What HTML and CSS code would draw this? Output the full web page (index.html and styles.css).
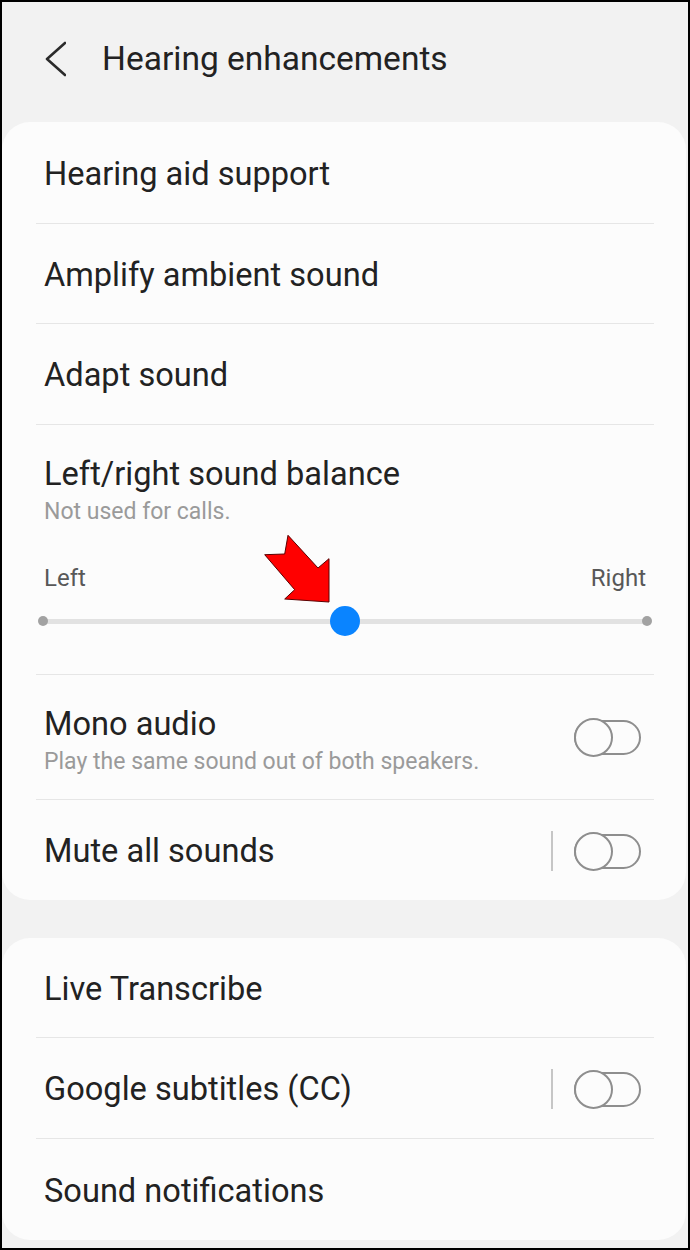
FILE: index.html
```html
<!DOCTYPE html>
<html lang="en">
<head>
<meta charset="utf-8">
<title>Hearing enhancements</title>
<link rel="stylesheet" href="styles.css">
</head>
<body>
<div class="screen">
  <header class="topbar">
    <svg class="back" width="22" height="36" viewBox="0 0 22 36" aria-hidden="true">
      <polyline points="21,2 3,18 21,34" fill="none" stroke="#2b2b2b" stroke-width="2.6" stroke-linecap="round" stroke-linejoin="round"/>
    </svg>
    <h1 class="title">Hearing enhancements</h1>
  </header>

  <section class="card">
    <div class="row h102"><span class="label">Hearing aid support</span></div>
    <div class="row h100"><span class="label">Amplify ambient sound</span></div>
    <div class="row h101"><span class="label">Adapt sound</span></div>
    <div class="row balance">
      <div class="label lh">Left/right sound balance</div>
      <div class="sub">Not used for calls.</div>
      <div class="ends"><span>Left</span><span>Right</span></div>
      <div class="slider">
        <span class="dot"></span>
        <span class="track"></span>
        <span class="dot"></span>
        <span class="thumb"></span>
      </div>
      <svg class="arrow" width="68" height="72" viewBox="264 533 68 72" aria-hidden="true">
        <polygon points="288,535.3 318,568 329,558.7 329,602 284.7,599 294.7,589.7 264.7,554.7 284.7,554" fill="#ff0000" stroke="#5a0000" stroke-width="1" stroke-linejoin="miter"/>
      </svg>
    </div>
    <div class="row mono">
      <div class="textblock">
        <div class="label lh">Mono audio</div>
        <div class="sub">Play the same sound out of both speakers.</div>
      </div>
      <span class="toggle"></span>
    </div>
    <div class="row h100 switchrow">
      <span class="label grow">Mute all sounds</span>
      <span class="vdiv"></span>
      <span class="toggle"></span>
    </div>
  </section>

  <section class="card">
    <div class="row h100"><span class="label">Live Transcribe</span></div>
    <div class="row h101 switchrow">
      <span class="label grow">Google subtitles (CC)</span>
      <span class="vdiv"></span>
      <span class="toggle"></span>
    </div>
    <div class="row h101"><span class="label">Sound notifications</span></div>
  </section>
</div>
</body>
</html>
```

FILE: styles.css
```css
*, *::before, *::after { box-sizing: border-box; }

html, body {
  margin: 0;
  padding: 0;
  background: #f2f2f2;
}

.screen {
  width: 690px;
  height: 1250px;
  border: 2px solid #000;
  background: #f2f2f2;
  font-family: Roboto, "Noto Sans", "Liberation Sans", sans-serif;
  color: #222;
  overflow: hidden;
}

.topbar {
  height: 120px;
  display: flex;
  align-items: center;
  padding: 0 0 6px 42px;
}

.back {
  display: block;
  flex: none;
}

.title {
  margin: 0 0 0 36px;
  font-size: 33.5px;
  line-height: 40px;
  font-weight: 400;
  color: #222;
}

.card {
  background: #fcfcfc;
  border-radius: 28px;
  margin: 0 2px 38px 0;
}

.row {
  display: flex;
  align-items: center;
  margin: 0 32px 0 34px;
  padding: 2px 0 0 8px;
  border-bottom: 1px solid #e6e6e6;
  position: relative;
}

.row:last-child { border-bottom: none; }

.h100 { height: 100px; }
.h101 { height: 101px; }
.h102 { height: 102px; }

.label {
  font-size: 32.6px;
  line-height: 38px;
  font-weight: 400;
  color: #222;
  white-space: nowrap;
}

.grow { flex: 1; }

.sub {
  margin-top: 6px;
  font-size: 23px;
  line-height: 26px;
  color: #9a9a9a;
  white-space: nowrap;
}

.balance {
  height: 250px;
  flex-direction: column;
  align-items: stretch;
  padding-top: 30px;
}

.ends {
  display: flex;
  justify-content: space-between;
  margin: 39px 8px 0 0;
  font-size: 24px;
  line-height: 28px;
  color: #585858;
}

.slider {
  position: relative;
  height: 30px;
  margin: 14px 2px 0 -6px;
  display: flex;
  align-items: center;
}

.dot {
  position: relative;
  z-index: 1;
  width: 10px;
  height: 10px;
  border-radius: 50%;
  background: #a2a2a2;
  flex: none;
}

.track {
  flex: 1;
  height: 5px;
  margin: 0 -5px;
  background: #e2e2e2;
}

.thumb {
  position: absolute;
  z-index: 2;
  left: 50%;
  top: 50%;
  width: 30px;
  height: 30px;
  border-radius: 50%;
  background: #0a84ff;
  transform: translate(-50%, -50%);
}

.arrow {
  position: absolute;
  left: 228px;
  top: 108px;
  z-index: 3;
}

.mono {
  height: 125px;
  padding-right: 13px;
  padding-top: 0;
}

.textblock {
  flex: 1;
  align-self: flex-start;
  padding-top: 30px;
}

.switchrow { padding-right: 13px; }

.vdiv {
  width: 2px;
  height: 40px;
  background: #c6c6c6;
  margin-right: 21px;
  flex: none;
}

.toggle {
  position: relative;
  width: 67px;
  height: 39px;
  flex: none;
}

.toggle::before {
  content: "";
  position: absolute;
  left: 0;
  top: 2px;
  width: 67px;
  height: 35px;
  border: 2px solid #8e8e8e;
  border-radius: 18px;
}

.toggle::after {
  content: "";
  position: absolute;
  left: 0;
  top: 0;
  width: 39px;
  height: 39px;
  border: 2px solid #8e8e8e;
  border-radius: 50%;
  background: #fcfcfc;
}
```
